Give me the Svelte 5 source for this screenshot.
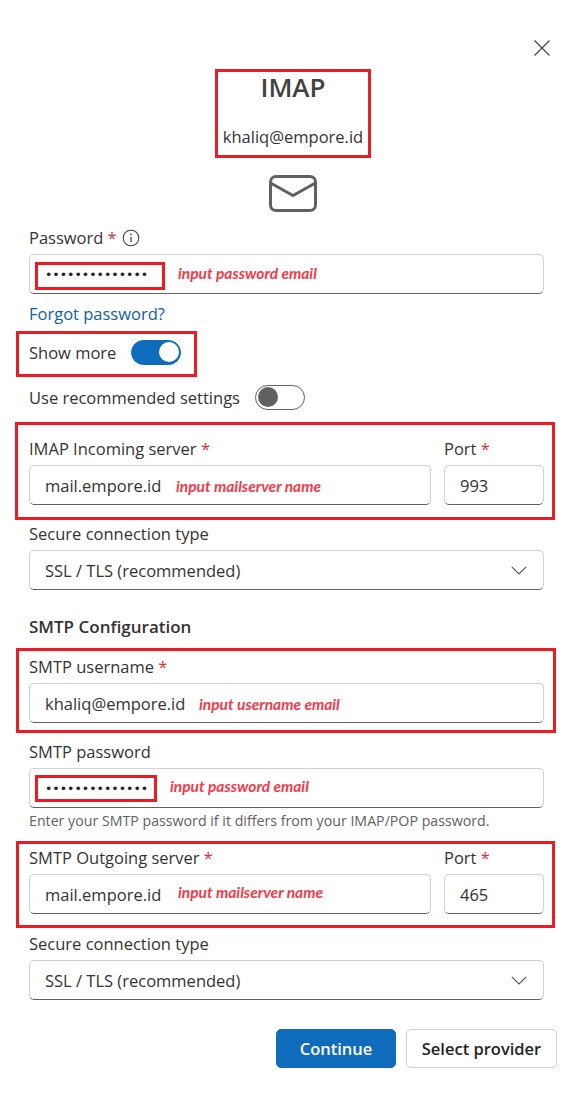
<script>
    let mailFields = {
        incoming: { label: "IMAP Incoming server", value: "mail.empore.id", port: "993", hint: "input mailserver name" },
        outgoing: { label: "SMTP Outgoing server", value: "mail.empore.id", port: "465", hint: "input mailserver name" }
    };
    const dots = "••••••••••••••";
</script>

<main class="dialog">
    <div class="closeRow">
        <svg class="close" viewBox="0 0 16 16" width="16" height="16"><path d="M.5.5l15 15M15.5.5l-15 15" fill="none" stroke="#444" stroke-width="1.2"/></svg>
    </div>

    <header class="head">
        <span class="box boxHead"></span>
        <h1>IMAP</h1>
        <p>khaliq@empore.id</p>
    </header>

    <div class="mail">
        <svg viewBox="0 0 48 37" width="48" height="37">
            <rect x="1.5" y="1.5" width="45" height="34" rx="5.5" fill="none" stroke="#616161" stroke-width="3"/>
            <path d="M2.5 8.5L24 20.5L45.5 8.5" fill="none" stroke="#616161" stroke-width="3"/>
        </svg>
    </div>

    <div class="label first">Password <em>*</em>
        <svg class="info" viewBox="0 0 18 18" width="18" height="18"><circle cx="9" cy="9" r="7.8" fill="none" stroke="#424242" stroke-width="1.1"/><path d="M9 8v5.2" stroke="#424242" stroke-width="1.2"/><circle cx="9" cy="5.4" r=".9" fill="#424242"/></svg>
    </div>
    <div class="field">
        <span class="dots">{dots}</span>
        <span class="hint hintPass">input password email</span>
        <span class="box boxPass"></span>
    </div>

    <a class="forgot" href="#forgot">Forgot password?</a>

    <div class="toggleRow showMore">
        <span class="box boxShow"></span>
        <span>Show more</span>
        <span class="toggle on"><i></i></span>
    </div>
    <div class="toggleRow recommended">
        <span>Use recommended settings</span>
        <span class="toggle"><i></i></span>
    </div>

    <div class="serverRow incoming">
        <span class="box boxIn"></span>
        <div class="grow">
            <div class="label">{mailFields.incoming.label} <em>*</em></div>
            <div class="field"><span class="val">{mailFields.incoming.value}</span><span class="hint hintIn">{mailFields.incoming.hint}</span></div>
        </div>
        <div class="port">
            <div class="label">Port <em>*</em></div>
            <div class="field"><span class="val">{mailFields.incoming.port}</span></div>
        </div>
    </div>

    <div class="label secure secureIn">Secure connection type</div>
    <div class="field select">
        <span class="val">SSL / TLS (recommended)</span>
        <svg viewBox="0 0 16 9" width="16" height="9"><path d="M.8.8L8 8L15.2.8" fill="none" stroke="#555" stroke-width="1.2"/></svg>
    </div>

    <h2>SMTP Configuration</h2>

    <div class="userRow">
        <span class="box boxUser"></span>
        <div class="label">SMTP username <em>*</em></div>
        <div class="field"><span class="val">khaliq@empore.id</span><span class="hint hintUser">input username email</span></div>
    </div>

    <div class="label smtpPass">SMTP password</div>
    <div class="field">
        <span class="dots">{dots}</span>
        <span class="hint hintSmtp">input password email</span>
        <span class="box boxSmtp"></span>
    </div>
    <p class="help">Enter your SMTP password if it differs from your IMAP/POP password.</p>

    <div class="serverRow outgoing">
        <span class="box boxOut"></span>
        <div class="grow">
            <div class="label">{mailFields.outgoing.label} <em>*</em></div>
            <div class="field"><span class="val">{mailFields.outgoing.value}</span><span class="hint hintOut">{mailFields.outgoing.hint}</span></div>
        </div>
        <div class="port">
            <div class="label">Port <em>*</em></div>
            <div class="field"><span class="val">{mailFields.outgoing.port}</span></div>
        </div>
    </div>

    <div class="label secure">Secure connection type</div>
    <div class="field select">
        <span class="val">SSL / TLS (recommended)</span>
        <svg viewBox="0 0 16 9" width="16" height="9"><path d="M.8.8L8 8L15.2.8" fill="none" stroke="#555" stroke-width="1.2"/></svg>
    </div>

    <div class="actions">
        <button class="primary">Continue</button>
        <button class="secondary">Select provider</button>
    </div>
</main>

<style>
    :global(body) {
        margin: 0;
        background: #fff;
    }
    .dialog {
        width: 588px;
        height: 1095px;
        box-sizing: border-box;
        padding: 40px 44px 0 29px;
        overflow: hidden;
        font-family: "Open Sans", "Liberation Sans", sans-serif;
        font-size: 16.5px;
        color: #333;
        background: #fff;
    }
    .closeRow {
        display: flex;
        justify-content: flex-end;
        margin-right: -6px;
        height: 16px;
    }
    .head {
        position: relative;
        width: 150px;
        height: 83px;
        margin: 16px 0 0 189px;
        text-align: center;
    }
    h1 {
        margin: 0;
        font-size: 26px;
        line-height: 30px;
        font-weight: 600;
        color: #424242;
    }
    .head p {
        margin: 0;
        padding-top: 24px;
        line-height: 22px;
        white-space: nowrap;
    }
    .mail {
        display: flex;
        justify-content: center;
        margin: 20px 0 0 13px;
        height: 37px;
    }
    .box {
        position: absolute;
        border: 3px solid #ed1c24;
        box-sizing: border-box;
        pointer-events: none;
    }
    .boxHead { left: -3px; right: -3px; top: -3px; bottom: -3px; }
    .boxPass { left: 5px; top: 7px; width: 130px; height: 28px; }
    .boxShow { left: -13px; top: -7px; width: 181px; height: 46px; }
    .boxIn { left: -14px; right: -11px; top: -16px; bottom: -15px; }
    .boxUser { left: -13px; right: -12px; top: -8px; bottom: -10px; }
    .boxSmtp { left: 5px; top: 6px; width: 122px; height: 27px; }
    .boxOut { left: -13px; right: -11px; top: -6px; bottom: -14px; }

    .label {
        height: 22px;
        line-height: 22px;
        white-space: nowrap;
    }
    .label em {
        font-style: normal;
        color: #d13438;
    }
    .first {
        display: flex;
        align-items: center;
        gap: 4px;
        margin-top: 15px;
        margin-bottom: 5px;
    }
    .info {
        margin-left: 2px;
    }
    .field {
        position: relative;
        display: flex;
        align-items: center;
        height: 40px;
        box-sizing: border-box;
        padding: 0 15px;
        border: 1px solid #d1d1d1;
        border-bottom-color: #616161;
        border-radius: 5px;
        background: #fff;
    }
    .val {
        white-space: nowrap;
    }
    .dots {
        font-family: "DejaVu Sans", sans-serif;
        font-size: 12.5px;
        color: #242424;
    }
    .hint {
        position: absolute;
        font-family: Lato, "Liberation Sans", sans-serif;
        font-size: 15.5px;
        line-height: 20px;
        font-style: italic;
        font-weight: 700;
        color: #f33a4a;
        white-space: nowrap;
    }
    .hintPass { left: 148px; top: 8px; }
    .hintIn { left: 146px; top: 10px; }
    .hintUser { left: 169px; top: 10px; }
    .hintSmtp { left: 140px; top: 7px; }
    .hintOut { left: 148px; top: 7px; }
    .forgot {
        display: block;
        margin-top: 9px;
        line-height: 22px;
        color: #115ea3;
        text-decoration: none;
    }
    .toggleRow {
        position: relative;
        display: flex;
        align-items: center;
        gap: 15px;
        height: 28px;
    }
    .showMore {
        margin-top: 13px;
    }
    .recommended {
        margin-top: 17px;
    }
    .toggle {
        display: block;
        position: relative;
        width: 50px;
        height: 25px;
        box-sizing: border-box;
        border: 1px solid #616161;
        border-radius: 13px;
        background: #fff;
    }
    .toggle i {
        position: absolute;
        left: 2px;
        top: 1.5px;
        width: 20px;
        height: 20px;
        border-radius: 50%;
        background: #616161;
    }
    .toggle.on {
        border-color: #0f6cbd;
        background: #0f6cbd;
    }
    .toggle.on i {
        left: 27px;
        background: #fff;
    }
    .serverRow {
        position: relative;
        display: flex;
        gap: 13px;
    }
    .incoming {
        margin-top: 27px;
    }
    .outgoing {
        margin-top: 16px;
    }
    .serverRow .label {
        margin-bottom: 5px;
    }
    .grow {
        flex: 1;
    }
    .port {
        width: 100px;
    }
    .secure {
        margin-top: 19px;
        margin-bottom: 5px;
    }
    .secureIn {
        margin-top: 18px;
    }
    .select {
        justify-content: space-between;
        padding-right: 16px;
    }
    h2 {
        margin: 26px 0 0;
        font-size: 17px;
        line-height: 22px;
        font-weight: 600;
        color: #333;
    }
    .userRow {
        position: relative;
        margin-top: 18px;
    }
    .userRow .label {
        margin-bottom: 5px;
    }
    .smtpPass {
        margin-top: 18px;
        margin-bottom: 5px;
    }
    .help {
        margin: 3px 0 0;
        font-size: 14.2px;
        line-height: 20px;
        color: #616161;
        white-space: nowrap;
    }
    .actions {
        display: flex;
        justify-content: flex-end;
        gap: 10px;
        margin: 29px -13px 0 0;
    }
    button {
        height: 39px;
        box-sizing: border-box;
        padding: 0;
        border: 1px solid #d1d1d1;
        border-radius: 5px;
        background: #fff;
        color: #242424;
        font: 600 16.5px "Open Sans", "Liberation Sans", sans-serif;
    }
    .primary {
        width: 120px;
        border-color: #0f6cbd;
        background: #0f6cbd;
        color: #fff;
    }
    .secondary {
        width: 151px;
    }
</style>
